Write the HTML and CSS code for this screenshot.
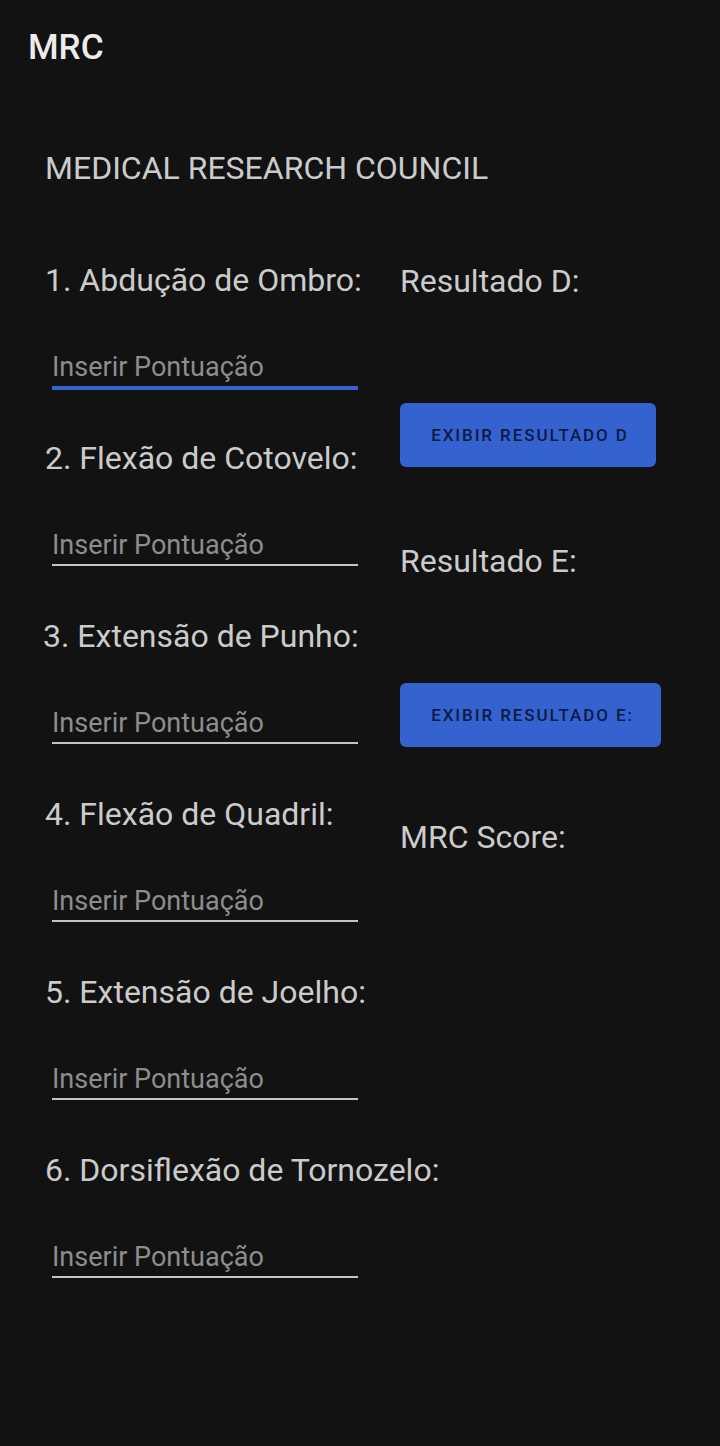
FILE: index.html
```html
<!DOCTYPE html>
<html lang="pt">
<head>
<meta charset="utf-8">
<title>MRC</title>
<link rel="stylesheet" href="styles.css">
</head>
<body>
<header class="toolbar">
  <h1 class="app-title">MRC</h1>
</header>
<main class="content">
  <h2 class="heading">MEDICAL RESEARCH COUNCIL</h2>
  <div class="columns">
    <section class="left">
      <div class="row">
        <label class="label">1. Abdução de Ombro:</label>
        <input class="score active" type="text" placeholder="Inserir Pontuação">
      </div>
      <div class="row">
        <label class="label">2. Flexão de Cotovelo:</label>
        <input class="score" type="text" placeholder="Inserir Pontuação">
      </div>
      <div class="row">
        <label class="label shifted">3. Extensão de Punho:</label>
        <input class="score" type="text" placeholder="Inserir Pontuação">
      </div>
      <div class="row">
        <label class="label">4. Flexão de Quadril:</label>
        <input class="score" type="text" placeholder="Inserir Pontuação">
      </div>
      <div class="row">
        <label class="label">5. Extensão de Joelho:</label>
        <input class="score" type="text" placeholder="Inserir Pontuação">
      </div>
      <div class="row">
        <label class="label">6. Dorsiflexão de Tornozelo:</label>
        <input class="score" type="text" placeholder="Inserir Pontuação">
      </div>
    </section>
    <section class="right">
      <p class="result result-d">Resultado D:</p>
      <button class="btn btn-d" type="button">Exibir Resultado D</button>
      <p class="result result-e">Resultado E:</p>
      <button class="btn btn-e" type="button">Exibir Resultado E:</button>
      <p class="result result-score">MRC Score:</p>
    </section>
  </div>
</main>
</body>
</html>
```
FILE: styles.css
```css
html, body {
  margin: 0;
  padding: 0;
  background: #121212;
}
body {
  width: 720px;
  min-height: 1446px;
  font-family: Roboto, "Noto Sans", "Liberation Sans", sans-serif;
  color: #cbcbcb;
}
.toolbar {
  height: 98px;
  padding-left: 28px;
  box-sizing: border-box;
}
.app-title {
  margin: 0;
  padding-top: 24px;
  font-size: 35px;
  line-height: 48px;
  font-weight: 500;
  color: #ececec;
}
.content {
  padding-left: 45px;
}
.heading {
  margin: 50px 0 0 0;
  font-size: 32px;
  line-height: 40px;
  font-weight: 400;
  color: #cbcbcb;
}
.columns {
  display: flex;
  margin-top: 72px;
}
.left {
  width: 355px;
  flex: none;
}
.row {
  display: flex;
  flex-direction: column;
  align-items: flex-start;
  margin-bottom: 50px;
}
.label {
  display: block;
  font-size: 32px;
  line-height: 40px;
  color: #cbcbcb;
  white-space: nowrap;
}
.label.shifted {
  margin-left: -2px;
}
.score {
  margin: 52px 0 0 7px;
  padding: 0 0 4px 0;
  width: 306px;
  height: 30px;
  box-sizing: content-box;
  background: transparent;
  border: none;
  border-bottom: 2px solid #c4c4c4;
  outline: none;
  font-family: Roboto, "Noto Sans", "Liberation Sans", sans-serif;
  font-size: 27px;
  line-height: 30px;
  color: #cbcbcb;
}
.score::placeholder {
  color: #8d8d8d;
}
.score.active {
  border-bottom: 4px solid #3563cf;
  margin-bottom: -2px;
}
.right {
  flex: 1;
  display: flex;
  flex-direction: column;
  align-items: flex-start;
}
.result {
  margin: 0;
  font-size: 32px;
  line-height: 40px;
  color: #cbcbcb;
}
.result-d { margin-top: 1px; }
.result-e { margin-top: 74px; }
.result-score { margin-top: 70px; }
.btn {
  height: 64px;
  border: none;
  border-radius: 6px;
  background: #3462cf;
  color: #0c1a44;
  font-family: Roboto, "Noto Sans", "Liberation Sans", sans-serif;
  font-size: 17px;
  font-weight: 500;
  letter-spacing: 1.9px;
  text-transform: uppercase;
  padding: 0 26px 0 30px;
}
.btn-d {
  margin-top: 102px;
  width: 256px;
}
.btn-e {
  margin-top: 102px;
  width: 261px;
}
```
